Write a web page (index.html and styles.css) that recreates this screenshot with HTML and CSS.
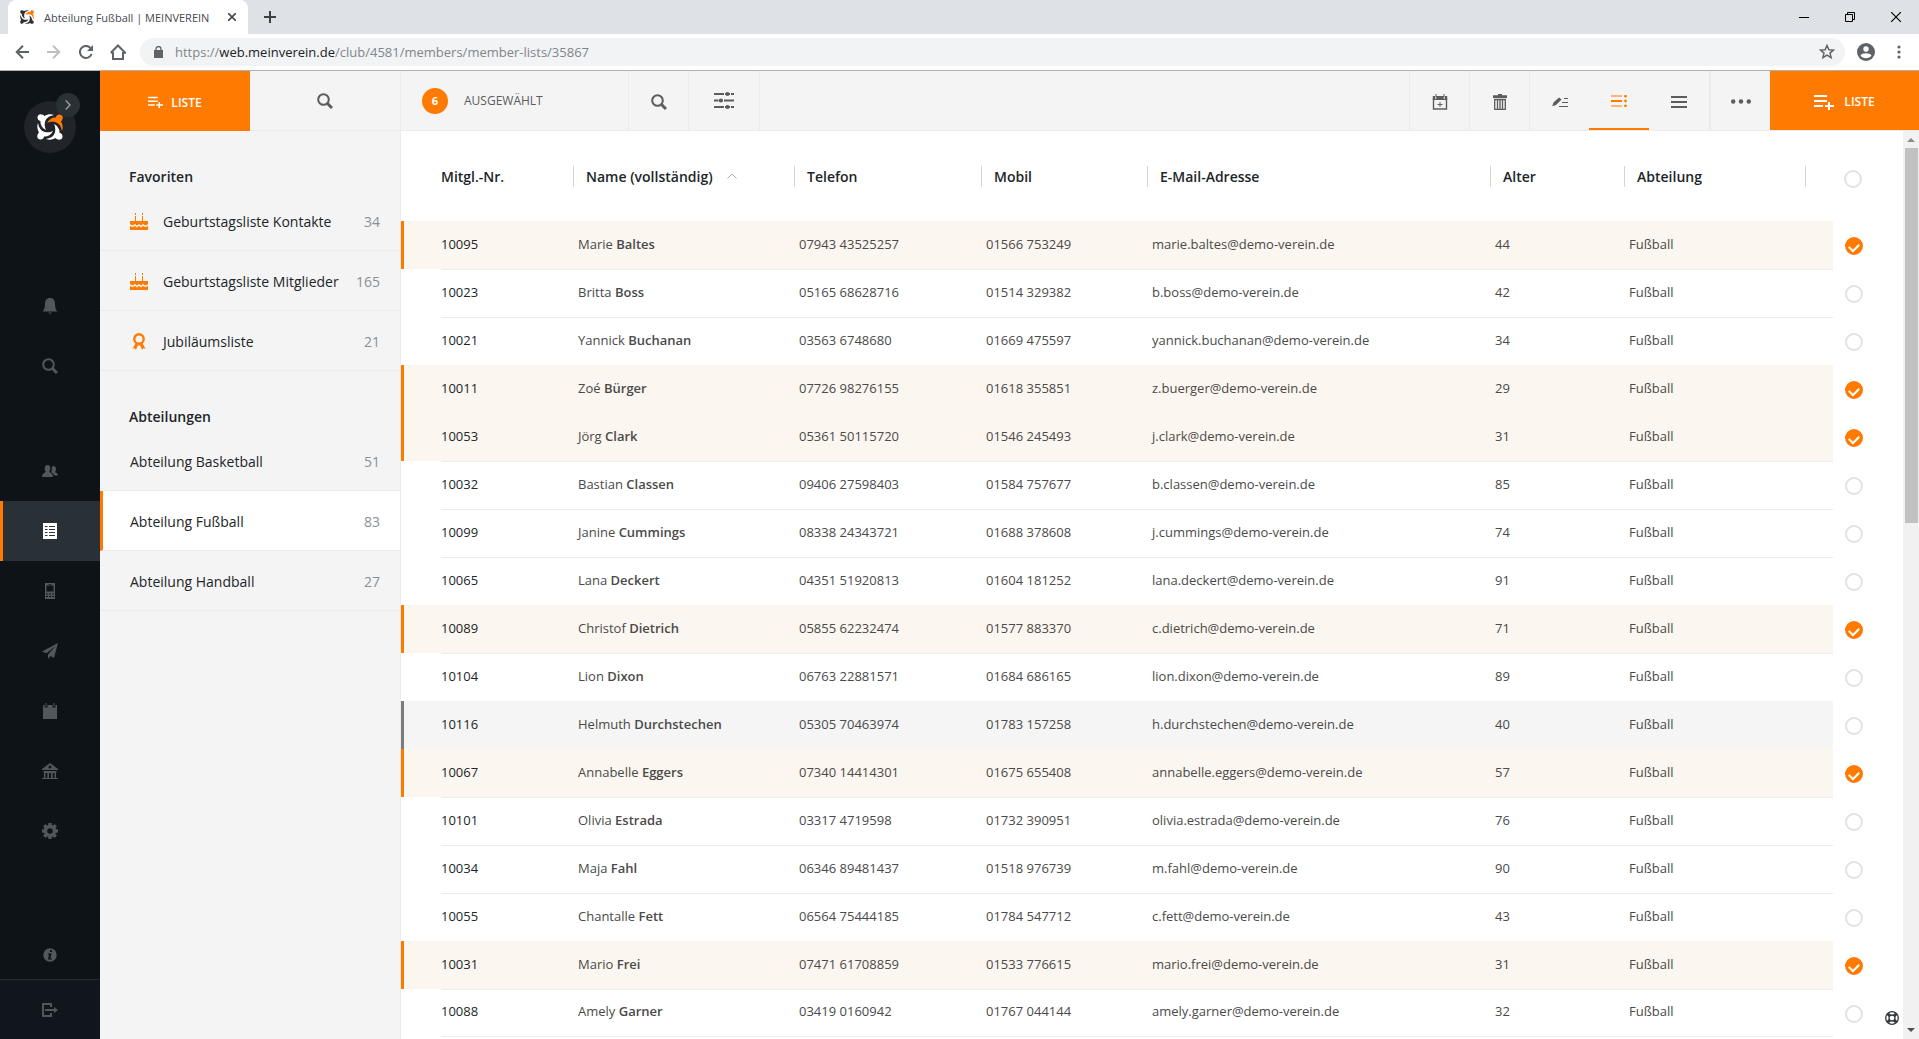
FILE: index.html
```html
<!DOCTYPE html>
<html lang="de">
<head>
    <meta charset="UTF-8">
    <meta name="viewport" content="width=device-width, initial-scale=1.0">
    <title>Abteilung Fußball | MEINVEREIN</title>
    <link rel="stylesheet" href="styles.css">
</head>
<body>
    <!-- Shared icons -->
    <svg class="sprite" aria-hidden="true">
        <symbol id="figure" viewBox="0 0 26 26">
            <path d="M10 9C12 5 16 3 19 3.500C19 .5 23-.5 25 1.500C26.500 3.500 25.500 6 24 7.500C26 11 26 14 25 17C24 12 22 9 18 8C15 7.300 12 8 10 9Z"/>
        </symbol>
        <symbol id="logo" viewBox="0 0 26 26">
            <g fill="currentColor">
                <use href="#figure" transform="rotate(90 13 13)"/>
                <use href="#figure" transform="rotate(180 13 13)"/>
                <use href="#figure" transform="rotate(270 13 13)"/>
            </g>
            <use href="#figure" fill="#ff7a00"/>
        </symbol>
        <symbol id="search" viewBox="0 0 16 16">
            <circle cx="6.500" cy="6.500" r="5.300" fill="none" stroke="currentColor" stroke-width="2"/>
            <path d="M10.500 10.500l4.500 4.500" stroke="currentColor" stroke-width="3"/>
        </symbol>
        <symbol id="list-add" viewBox="0 0 20 16">
            <path d="M0 1h13v2H0zM0 6h13v2H0zM0 11h9v2H0zM14 8h2v3h4v2h-4v3h-2v-3h-3v-2h3z" fill="currentColor"/>
        </symbol>
        <symbol id="cake" viewBox="0 0 18 17">
            <path d="M0 8h18v9H0zM5 3h1v5H5zM12 3h1v5h-1zM5 0h1v2H5zM12 0h1v2h-1z" fill="currentColor"/>
            <path d="M0 12l2.500 1.500L5 12l2 1.500L9 12l2 1.500 2-1.500 2.500 1.500L18 12" fill="none" stroke="#f4f4f4" stroke-width="1.500"/>
        </symbol>
    </svg>

    <!-- Browser bar -->
    <div class="tab-strip">
        <div class="tab">
            <svg class="favicon" width="14" height="14"><use href="#logo"/></svg>
            <span class="tab-title">Abteilung Fußball | MEINVEREIN</span>
            <button class="plain" aria-label="Tab schließen"><svg width="8" height="8" viewBox="0 0 8 8"><path d="M0 0l8 8M8 0L0 8" stroke="#45494d" stroke-width="1.600"/></svg></button>
        </div>
        <button class="plain new-tab" aria-label="Neuer Tab"><svg width="12" height="12" viewBox="0 0 12 12"><path d="M6 0v12M0 6h12" stroke="#3c4043" stroke-width="2"/></svg></button>
        <div class="window-buttons">
            <button class="plain" aria-label="Minimieren"><svg width="10" height="10" viewBox="0 0 10 10"><path d="M0 5.500h10" stroke="#000"/></svg></button>
            <button class="plain" aria-label="Verkleinern"><svg width="10" height="10" viewBox="0 0 10 10"><path d="M.5 2.500h7v7h-7zM2.500 2.500v-2h7v7h-2" fill="none" stroke="#000"/></svg></button>
            <button class="plain" aria-label="Schließen"><svg width="10" height="10" viewBox="0 0 10 10"><path d="M0 0l10 10M10 0L0 10" stroke="#000" stroke-width="1.200"/></svg></button>
        </div>
    </div>
    <div class="address-bar">
        <div class="history">
            <button class="plain" aria-label="Zurück"><svg width="14" height="14" viewBox="0 0 14 14"><path d="M14 7H2M8 .7L1.700 7 8 13.300" fill="none" stroke="#5f6368" stroke-width="2"/></svg></button>
            <button class="plain" aria-label="Vor"><svg width="14" height="14" viewBox="0 0 14 14"><path d="M0 7h12M6 .7L12.300 7 6 13.300" fill="none" stroke="#bdbfc1" stroke-width="2"/></svg></button>
            <button class="plain" aria-label="Neu laden"><svg width="14" height="14" viewBox="0 0 14 14"><path d="M12.600 9A6 6 0 1 1 11.500 3" fill="none" stroke="#5f6368" stroke-width="2"/><path d="M14 0v6H8z" fill="#5f6368"/></svg></button>
            <button class="plain" aria-label="Startseite"><svg width="16" height="16" viewBox="0 0 16 16"><path d="M3 8v7h10V8M.8 8.800L8 1.500l7.200 7.300H13M3 8.800H.8" fill="none" stroke="#5f6368" stroke-width="2"/></svg></button>
        </div>
        <div class="omnibox">
            <svg width="9" height="12" viewBox="0 0 9 12"><path d="M0 4h9v8H0z" fill="#5f6368"/><path d="M2 5V3a2.500 2.500 0 0 1 5 0v2" fill="none" stroke="#5f6368" stroke-width="1.300"/></svg>
            <span class="url">https://<b>web.meinverein.de</b>/club/4581/members/member-lists/35867</span>
            <svg width="16" height="16" viewBox="0 0 16 16"><path d="M8 1.500l1.900 4.200 4.600.4-3.500 3 1.100 4.500L8 11.200l-4.100 2.400L5 9.100l-3.500-3 4.600-.4z" fill="none" stroke="#5f6368" stroke-width="1.500"/></svg>
        </div>
        <button class="plain" aria-label="Profil"><svg width="18" height="18" viewBox="0 0 18 18"><circle cx="9" cy="9" r="9" fill="#5f6368"/><circle cx="9" cy="6" r="2.700" fill="#fff"/><path d="M3.500 12.500c1.500-3 9.500-3 11 0-2.500 3.700-8.500 3.700-11 0z" fill="#fff"/></svg></button>
        <button class="plain menu-dots" aria-label="Menü"><svg width="4" height="14" viewBox="0 0 4 14"><g fill="#5f6368"><circle cx="2" cy="2" r="1.600"/><circle cx="2" cy="7" r="1.600"/><circle cx="2" cy="12" r="1.600"/></g></svg></button>
    </div>

    <div class="app">
        <!-- Main navigation -->
        <nav class="nav">
            <div class="brand">
                <svg width="26" height="26"><use href="#logo"/></svg>
                <button class="expand" aria-label="Navigation öffnen"><svg width="6" height="10" viewBox="0 0 6 10"><path d="M.7.5L5 5 .7 9.500" fill="none" stroke="#9a9da0" stroke-width="1.400"/></svg></button>
            </div>
            <a class="nav-item" href="#" aria-label="Benachrichtigungen"><svg width="16" height="16" viewBox="0 0 16 16"><path d="M8 0c3.500 0 5 2.500 5 5.500 0 4 .8 6.500 2.500 8H.5c1.700-1.500 2.500-4 2.500-8C3 2.500 4.500 0 8 0zM6 14.500h4L8 16z" fill="currentColor"/></svg></a>
            <a class="nav-item" href="#" aria-label="Suche"><svg width="16" height="16"><use href="#search"/></svg></a>
            <a class="nav-item group-start" href="#" aria-label="Mitglieder"><svg width="16" height="12" viewBox="0 0 16 12"><path d="M5.500 0C7.500 0 8.500 1.500 8.300 3.500 8.100 5 7.500 6 7.200 6.500c0 1 3.800 1.200 3.800 5.500H0c0-4 3.800-4.500 3.800-5.500C3 6 2.700 5 2.700 3.500 2.700 1.500 3.600 0 5.500 0zM11.500 1C13 1 14 2 14 4c0 1.500-.8 2.500-.8 3 0 .8 2.800 1 2.800 3.500h-4C11.500 8.500 10 7.800 9 7c.8-1 1-2.500.8-4.500C10.200 1.500 10.800 1 11.500 1z" fill="currentColor"/></svg></a>
            <a class="nav-item active" href="#" aria-label="Listen"><svg width="14" height="16" viewBox="0 0 14 16"><path d="M0 0h14v16H0z" fill="currentColor"/><path d="M6 3.500h6M6 6.500h6M6 9.500h6M6 12.500h6M2 3.500h2.500M2 6.500h2.500M2 9.500h2.500M2 12.500h2.500" stroke="#2a3136"/></svg></a>
            <a class="nav-item" href="#" aria-label="Mobil"><svg width="10" height="16" viewBox="0 0 10 16"><path fill-rule="evenodd" d="M0 0h10v16H0zM1.500 2.500v6h7v-6zM3.500 1h3v.8h-3zM1 10.500v1h2v-1zM4 10.500v1h2v-1zM7 10.500v1h2v-1zM1 13v1h2v-1zM4 13v1h2v-1zM7 13v1h2v-1z" fill="currentColor"/></svg></a>
            <a class="nav-item" href="#" aria-label="Nachrichten"><svg width="16" height="16" viewBox="0 0 16 16"><path d="M16 0L0 8.500l4.500 1.800L13.500 3 6 11.500V16l2.500-3 3.500 2z" fill="currentColor"/></svg></a>
            <a class="nav-item" href="#" aria-label="Kalender"><svg width="16" height="16" viewBox="0 0 16 16"><path d="M1 2h1.500v2.500h3V2h5v2.500h3V2H15v14H1zM3.500 0h1v3.500h-1zM11.500 0h1v3.500h-1z" fill="currentColor"/></svg></a>
            <a class="nav-item" href="#" aria-label="Finanzen"><svg width="16" height="16" viewBox="0 0 16 16"><path fill-rule="evenodd" d="M8 0l8 6v1H0V6zM8 2.500a1.500 1.500 0 1 0 0 3 1.500 1.500 0 0 0 0-3zM1.500 8h13v1.500H14V15h2v1H0v-1h2V9.500h-.5zM3.500 10v5h1.800v-5zM7 10v5h2v-5zM10.700 10v5h1.800v-5z" fill="currentColor"/></svg></a>
            <a class="nav-item" href="#" aria-label="Einstellungen"><svg width="16" height="16" viewBox="0 0 16 16"><circle cx="8" cy="8" r="4.500" fill="none" stroke="currentColor" stroke-width="3.400"/><path d="M8 0v3M8 13v3M0 8h3M13 8h3M2.300 2.300l2.200 2.200M11.500 11.500l2.200 2.200M2.300 13.700l2.200-2.200M11.500 4.500l2.200-2.200" stroke="currentColor" stroke-width="3.400"/></svg></a>
            <a class="nav-item info" href="#" aria-label="Info"><svg width="14" height="14" viewBox="0 0 14 14"><circle cx="7" cy="7" r="6.700" fill="currentColor"/><path d="M7 2h2v2H7zM5 5.500h3.500L7.300 10.500H9v1H5l1-5H5z" fill="#0e1317"/></svg></a>
            <a class="nav-item logout" href="#" aria-label="Abmelden"><svg width="16" height="14" viewBox="0 0 16 14"><path d="M9 4V1H1v12h8v-3M3 7h11" fill="none" stroke="currentColor" stroke-width="2"/><path d="M12 4l4 3-4 3z" fill="currentColor"/></svg></a>
        </nav>

        <!-- Lists -->
        <aside class="sidebar">
            <div class="sidebar-bar">
                <button class="add-list"><svg width="15" height="12"><use href="#list-add"/></svg>LISTE</button>
                <button class="sidebar-search" aria-label="Liste suchen"><svg width="16" height="16"><use href="#search"/></svg></button>
            </div>
            <h2>Favoriten</h2>
            <a class="list-link" href="#"><svg width="18" height="17"><use href="#cake"/></svg>Geburtstagsliste Kontakte<span>34</span></a>
            <a class="list-link" href="#"><svg width="18" height="17"><use href="#cake"/></svg>Geburtstagsliste Mitglieder<span>165</span></a>
            <a class="list-link" href="#"><svg width="18" height="17" viewBox="0 0 18 17"><circle cx="9" cy="6" r="4.700" fill="none" stroke="currentColor" stroke-width="2.400"/><path d="M5.500 10.500L9 12l3.500-1.500 3 5-2.300-.3-1 1.800-2-4.500h-2.400l-2 4.500-1-1.800-2.300.3z" fill="currentColor"/></svg>Jubiläumsliste<span>21</span></a>
            <h2>Abteilungen</h2>
            <a class="list-link" href="#">Abteilung Basketball<span>51</span></a>
            <a class="list-link active" href="#">Abteilung Fußball<span>83</span></a>
            <a class="list-link" href="#">Abteilung Handball<span>27</span></a>
        </aside>

        <!-- Member table -->
        <main class="content">
            <div class="toolbar">
                <div class="selection"><span class="badge">6</span>AUSGEWÄHLT</div>
                <button class="tool" aria-label="Suche"><svg width="16" height="16"><use href="#search"/></svg></button>
                <button class="tool filter" aria-label="Filter"><svg width="20" height="18" viewBox="0 0 20 18"><path d="M0 2h10M17 2h3M0 8.500h4M10 8.500h10M0 15h10M17 15h3" stroke="currentColor" stroke-width="2"/><path d="M11 2h5M4.500 8.500h4.500M11 15h5" stroke="currentColor" stroke-width="2"/><g fill="currentColor"><circle cx="13.500" cy="2" r="2"/><circle cx="6.800" cy="8.500" r="2"/><circle cx="13.500" cy="15" r="2"/></g></svg></button>
                <div class="actions">
                    <button class="tool" aria-label="Termin anlegen"><svg width="16" height="16" viewBox="0 0 16 16"><path d="M1.500 4v11h13V4" fill="none" stroke="currentColor" stroke-width="1.400"/><path d="M.8 2H3v2.500h1.500V2h7v2.500H13V2h2.200v4H.8zM3.500 0h1v3.500h-1zM11.500 0h1v3.500h-1zM7.500 8h1v2h2v1h-2v2h-1v-2h-2v-1h2z" fill="currentColor"/></svg></button>
                    <button class="tool" aria-label="Löschen"><svg width="14" height="16" viewBox="0 0 14 16"><path d="M0 1.200h5V0h4v1.200h5V4H0z" fill="currentColor"/><path d="M1.700 5.500v9.800h10.600V5.500M1 5.500h12M4.500 5.500V15M7 5.500V15M9.500 5.500V15" fill="none" stroke="currentColor" stroke-width="1.300"/></svg></button>
                    <button class="tool" aria-label="Bearbeiten"><svg width="16" height="10" viewBox="0 0 16 10"><path d="M7 .5l2.500 2L4 8 .2 9.200 1.500 5.500zM12 1h4v1h-4zM10 5h6v1h-6zM7 9h9v1H7z" fill="currentColor"/></svg></button>
                    <button class="tool active" aria-label="Listenansicht"><svg width="16" height="12" viewBox="0 0 16 12"><path d="M0 .5h11v1H0zM0 5h11v2H0zM0 10.500h11v1H0z" fill="currentColor"/><g fill="currentColor"><circle cx="14.500" cy="1.200" r="1.400"/><circle cx="14.500" cy="6" r="1.400"/><circle cx="14.500" cy="10.800" r="1.400"/></g></svg></button>
                    <button class="tool" aria-label="Kompakte Ansicht"><svg width="16" height="12" viewBox="0 0 16 12"><path d="M0 0h16v2H0zM0 5h16v2H0zM0 10h16v2H0z" fill="currentColor"/></svg></button>
                    <button class="tool more" aria-label="Mehr"><svg width="20" height="5" viewBox="0 0 20 5"><g fill="currentColor"><circle cx="2.200" cy="2.500" r="2.200"/><circle cx="10" cy="2.500" r="2.200"/><circle cx="17.800" cy="2.500" r="2.200"/></g></svg></button>
                    <button class="add-list large"><svg width="20" height="16"><use href="#list-add"/></svg>LISTE</button>
                </div>
            </div>
            <div class="table-area">
                <table class="members">
                    <colgroup>
                        <col class="col-mark"><col class="col-number"><col class="col-name"><col class="col-phone"><col class="col-mobile"><col><col class="col-age"><col class="col-department"><col class="col-end"><col class="col-check">
                    </colgroup>
                    <thead>
                        <tr>
                            <td></td>
                            <th class="first"><span>Mitgl.-Nr.</span></th>
                            <th><span>Name (vollständig)<svg width="10" height="6" viewBox="0 0 10 6"><path d="M.5 5.500L5 1l4.500 4.500" fill="none" stroke="#a9abad"/></svg></span></th>
                            <th><span>Telefon</span></th>
                            <th><span>Mobil</span></th>
                            <th><span>E-Mail-Adresse</span></th>
                            <th><span>Alter</span></th>
                            <th><span>Abteilung</span></th>
                            <th aria-label="Ende"><span></span></th>
                            <td class="check"><input type="checkbox" aria-label="Alle auswählen"></td>
                        </tr>
                    </thead>
                    <tbody id="memberRows"></tbody>
                </table>
                <button class="plain help" aria-label="Hilfe"><svg width="14" height="14" viewBox="0 0 14 14"><circle cx="7" cy="7" r="6.300" fill="#fff" stroke="#33383c" stroke-width="1.300"/><path d="M2.700 2.700l2.300 2.300M9 9l2.300 2.300M2.700 11.300L5 9M9 5l2.300-2.300" stroke="#33383c" stroke-width="3"/><circle cx="7" cy="7" r="3" fill="#fff" stroke="#33383c" stroke-width="1.300"/></svg></button>
                <div class="scrollbar">
                    <svg width="8" height="4" viewBox="0 0 8 4"><path d="M0 4l4-4 4 4z" fill="#8b8b8b"/></svg>
                    <div class="thumb"></div>
                    <svg width="8" height="4" viewBox="0 0 8 4"><path d="M0 0l4 4 4-4z" fill="#505050"/></svg>
                </div>
            </div>
        </main>
    </div>

    <script>
        const members = [
            ['10095', 'Marie', 'Baltes', '07943 43525257', '01566 753249', 'marie.baltes', 44, 'selected'],
            ['10023', 'Britta', 'Boss', '05165 68628716', '01514 329382', 'b.boss', 42],
            ['10021', 'Yannick', 'Buchanan', '03563 6748680', '01669 475597', 'yannick.buchanan', 34],
            ['10011', 'Zoé', 'Bürger', '07726 98276155', '01618 355851', 'z.buerger', 29, 'selected'],
            ['10053', 'Jörg', 'Clark', '05361 50115720', '01546 245493', 'j.clark', 31, 'selected'],
            ['10032', 'Bastian', 'Classen', '09406 27598403', '01584 757677', 'b.classen', 85],
            ['10099', 'Janine', 'Cummings', '08338 24343721', '01688 378608', 'j.cummings', 74],
            ['10065', 'Lana', 'Deckert', '04351 51920813', '01604 181252', 'lana.deckert', 91],
            ['10089', 'Christof', 'Dietrich', '05855 62232474', '01577 883370', 'c.dietrich', 71, 'selected'],
            ['10104', 'Lion', 'Dixon', '06763 22881571', '01684 686165', 'lion.dixon', 89],
            ['10116', 'Helmuth', 'Durchstechen', '05305 70463974', '01783 157258', 'h.durchstechen', 40, 'focused'],
            ['10067', 'Annabelle', 'Eggers', '07340 14414301', '01675 655408', 'annabelle.eggers', 57, 'selected'],
            ['10101', 'Olivia', 'Estrada', '03317 4719598', '01732 390951', 'olivia.estrada', 76],
            ['10034', 'Maja', 'Fahl', '06346 89481437', '01518 976739', 'm.fahl', 90],
            ['10055', 'Chantalle', 'Fett', '06564 75444185', '01784 547712', 'c.fett', 43],
            ['10031', 'Mario', 'Frei', '07471 61708859', '01533 776615', 'mario.frei', 31, 'selected'],
            ['10088', 'Amely', 'Garner', '03419 0160942', '01767 044144', 'amely.garner', 32]
        ];

        // Build one table row per member
        document.getElementById('memberRows').innerHTML = members.map(([nr, first, last, phone, mobile, mail, age, state]) => `
            <tr class="${state || ''}">
                <td></td>
                <td class="number">${nr}</td>
                <td>${first} <b>${last}</b></td>
                <td>${phone}</td>
                <td>${mobile}</td>
                <td>${mail}@demo-verein.de</td>
                <td>${age}</td>
                <td>Fußball</td>
                <td></td>
                <td class="check"><input type="checkbox" aria-label="${first} ${last} auswählen" ${state === 'selected' ? 'checked' : ''}></td>
            </tr>`).join('');
    </script>
</body>
</html>
```
FILE: styles.css
```css
/* General styling */
* {
    box-sizing: border-box;
}
body {
    margin: 0;
    height: 100vh;
    display: flex;
    flex-direction: column;
    overflow: hidden;
    background-color: #fff;
    color: #212529;
    font-family: "Open Sans", "Noto Sans", sans-serif;
    font-size: 14px;
}
button {
    font-family: inherit;
    border: none;
    padding: 0;
    background: none;
    cursor: pointer;
}
svg {
    flex: none;
    display: block;
}
a {
    color: inherit;
    text-decoration: none;
}
.sprite {
    position: absolute;
    width: 0;
    height: 0;
}
/* Browser bar */
.plain {
    display: flex;
    align-items: center;
    justify-content: center;
}
.tab-strip {
    height: 34px;
    display: flex;
    flex: none;
    align-items: center;
    padding-left: 8px;
    background-color: #dee1e6;
}
.tab {
    width: 240px;
    height: 34px;
    display: flex;
    align-items: center;
    padding: 0 12px;
    border-radius: 8px 8px 0 0;
    background-color: #fff;
    font-size: 11px;
    color: #45494d;
}
.favicon {
    color: #333;
}
.tab-title {
    flex: 1;
    margin-left: 10px;
    white-space: nowrap;
}
.new-tab {
    margin-left: 16px;
}
.window-buttons {
    display: flex;
    margin-left: auto;
}
.window-buttons .plain {
    width: 46px;
    height: 28px;
}
.address-bar {
    height: 37px;
    display: flex;
    flex: none;
    align-items: center;
    border-bottom: 1px solid #b0b0b2;
    padding: 0 18px 0 6px;
}
.history {
    display: flex;
    width: 134px;
}
.history .plain {
    width: 32px;
}
.omnibox {
    flex: 1;
    height: 28px;
    display: flex;
    align-items: center;
    padding: 0 10px 0 14px;
    border-radius: 14px;
    background-color: #f1f3f4;
    margin-right: 12px;
}
.url {
    flex: 1;
    margin-left: 12px;
    font-size: 13px;
    color: #80868b;
}
.url b {
    font-weight: 400;
    color: #202124;
}
.menu-dots {
    margin-left: 22px;
}
/* App layout */
.app {
    flex: 1;
    min-height: 0;
    display: flex;
}
.nav {
    width: 100px;
    flex: none;
    display: flex;
    flex-direction: column;
    background-color: #0e1317;
    color: #51575b;
}
.brand {
    position: relative;
    width: 52px;
    height: 52px;
    margin: 30px auto 123px;
    display: flex;
    align-items: center;
    justify-content: center;
    border-radius: 50%;
    background-color: #212529;
    color: #fff;
}
.expand {
    position: absolute;
    top: -8px;
    right: -4px;
    width: 24px;
    height: 24px;
    display: flex;
    align-items: center;
    justify-content: center;
    border-radius: 50%;
    background-color: #2a3136;
}
.nav-item {
    height: 60px;
    display: flex;
    align-items: center;
    justify-content: center;
}
.nav-item.group-start {
    margin-top: 45px;
}
.nav-item.active {
    border-left: 3px solid #ff7a00;
    padding-right: 3px;
    background-color: #2a3136;
    color: #fff;
}
.nav-item.info {
    height: 48px;
    margin-top: auto;
}
.nav-item.logout {
    border-top: 1px solid #292d31;
    background-color: #11161d;
}
/* Sidebar styling */
.sidebar {
    width: 301px;
    flex: none;
    background-color: #f4f4f4;
    border-right: 1px solid #ebebeb;
}
.sidebar-bar {
    display: flex;
    height: 60px;
}
.add-list {
    width: 150px;
    display: flex;
    align-items: center;
    justify-content: center;
    gap: 8px;
    padding-top: 2px;
    background-color: #ff7a00;
    color: #fff;
    font-size: 12px;
    font-weight: 600;
}
.sidebar-search {
    flex: 1;
    display: flex;
    align-items: center;
    justify-content: center;
    border-bottom: 1px solid #ebebeb;
    color: #5c5c5c;
}
.sidebar h2 {
    height: 60px;
    margin: 0;
    padding: 32px 29px 0;
    line-height: 28px;
    font-size: 14px;
    font-weight: 600;
}
.list-link {
    height: 60px;
    display: flex;
    align-items: center;
    border-bottom: 1px solid #ebebeb;
    padding: 2px 20px 0 30px;
    white-space: nowrap;
}
.list-link svg {
    margin-right: 15px;
    color: #ff7a00;
}
.list-link span {
    margin-left: auto;
    color: #8b8f93;
}
.list-link.active {
    border-left: 3px solid #ff7a00;
    padding-left: 27px;
    background-color: #fff;
}
/* Toolbar styling */
.content {
    flex: 1;
    min-width: 0;
    display: flex;
    flex-direction: column;
}
.toolbar {
    height: 60px;
    flex: none;
    display: flex;
    border-bottom: 1px solid #ebebeb;
    background-color: #f4f4f4;
    color: #5c5c5c;
}
.selection {
    width: 227px;
    display: flex;
    align-items: center;
    gap: 16px;
    padding-left: 21px;
    font-size: 12px;
}
.badge {
    width: 26px;
    height: 26px;
    line-height: 26px;
    border-radius: 50%;
    background-color: #ff7a00;
    color: #fff;
    font-size: 11px;
    font-weight: 700;
    text-align: center;
}
.tool {
    width: 60px;
    display: flex;
    align-items: center;
    justify-content: center;
    border-left: 1px solid #ebebeb;
    padding-top: 2px;
    color: #5c5c5c;
}
.tool.filter {
    width: 72px;
    border-right: 1px solid #ebebeb;
    padding-top: 0;
}
.actions {
    display: flex;
    margin-left: auto;
}
.tool.active {
    border-left: none;
    border-bottom: 2px solid #ff7a00;
    color: #ff7a00;
}
.tool.active + .tool {
    border-left: none;
}
.tool.more {
    width: 61px;
    border-left-width: 2px;
}
.add-list.large {
    width: 149px;
    gap: 10px;
}
/* Member table */
.table-area {
    position: relative;
    flex: 1;
    min-height: 0;
    display: flex;
    align-items: flex-start;
    overflow: hidden;
}
.members {
    flex: 1;
    width: 100%;
    table-layout: fixed;
    border-collapse: separate;
    border-spacing: 0;
    font-size: 13px;
    color: #4a4a4a;
}
.col-mark {
    width: 40px;
}
.col-number {
    width: 132px;
}
.col-name {
    width: 221px;
}
.col-phone {
    width: 187px;
}
.col-mobile {
    width: 166px;
}
.col-age {
    width: 134px;
}
.col-department {
    width: 181px;
}
.col-end {
    width: 28px;
}
.col-check {
    width: 70px;
}
.members thead tr {
    height: 90px;
}
.members th {
    padding: 0;
    text-align: left;
    font-size: 14px;
    font-weight: 600;
    color: #212529;
}
.members th span {
    display: flex;
    align-items: center;
    height: 21px;
    border-left: 1px solid #d5d5d7;
    padding-left: 12px;
    white-space: nowrap;
}
.members th.first span {
    border-left: none;
    padding-left: 0;
}
.members th svg {
    margin-left: 14px;
}
.members tbody tr {
    height: 48px;
}
.members tbody td {
    border-top: 1px solid #ebebeb;
    padding: 0 0 4px 5px;
    white-space: nowrap;
}
.members tbody td:first-child {
    border-top: none;
}
.members tbody td.number {
    padding-left: 0;
    color: #212529;
}
.members b {
    font-weight: 600;
}
.members tbody .selected td:not(.check) {
    border-top-color: #fbf6ef;
    background-color: #fbf6ef;
}
.members tbody .focused td:not(.check) {
    border-top-color: #f5f5f5;
    background-color: #f5f5f5;
}
.members .selected td:first-child {
    border-left: 3px solid #ff7a00;
}
.members .focused td:first-child {
    border-left: 3px solid #7c7c7c;
}
.members tbody tr:last-child td:not(:first-child):not(.check) {
    border-bottom: 1px solid #ebebeb;
}
/* Round tick boxes */
.members thead td.check {
    padding: 5px 0 0 11px;
}
.members tbody td.check {
    border-top: none;
    padding: 2px 0 0 12px;
}
.check input {
    appearance: none;
    display: block;
    width: 18px;
    height: 18px;
    margin: 0;
    border: 2px solid #dfe2e6;
    border-radius: 50%;
}
.check input:checked {
    display: flex;
    align-items: flex-start;
    justify-content: center;
    border-color: #ff7a00;
    background-color: #ff7a00;
}
.check input:checked::after {
    content: "";
    width: 8px;
    height: 5px;
    margin-top: 4px;
    border-left: 2px solid #fff;
    border-bottom: 2px solid #fff;
    transform: rotate(-45deg);
}
.help {
    position: absolute;
    right: 20px;
    bottom: 14px;
}
.scrollbar {
    width: 16px;
    flex: none;
    align-self: stretch;
    display: flex;
    flex-direction: column;
    align-items: center;
    padding: 7px 0;
    background-color: #f1f1f1;
}
.thumb {
    width: 13px;
    height: 42%;
    margin: 6px 0 auto;
    background-color: #c1c1c1;
}
```
